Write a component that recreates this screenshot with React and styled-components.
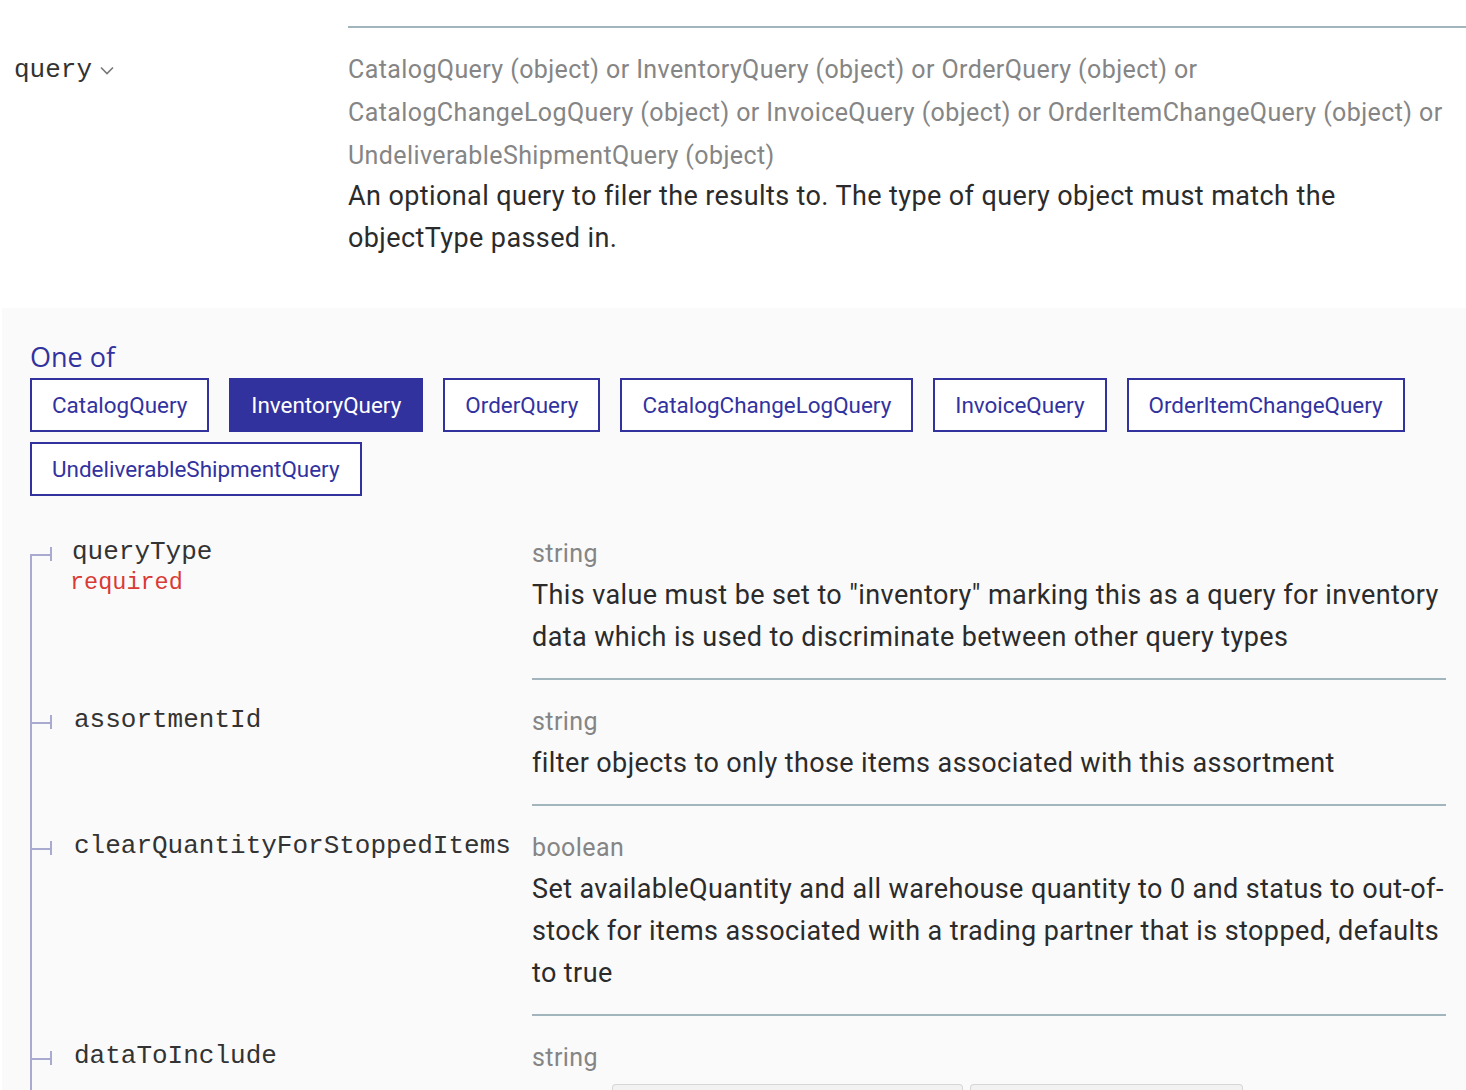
import React from "react";
import styled, { createGlobalStyle, css } from "styled-components";

const colors = {
  primary: "#32329f",
  tree: "#a9aad0",
  divider: "#a2b4bc",
  dimmed: "#858585",
  text: "#2b2b2b",
  code: "#333",
  required: "#d93a35",
  panel: "#fafafa"
};

const mono = `"Courier New", "Liberation Mono", monospace`;

const GlobalStyle = createGlobalStyle`
  html, body {
    margin: 0;
    padding: 0;
    background: #fff;
    overflow: hidden;
  }
  body {
    font-family: Roboto, "Liberation Sans", sans-serif;
    color: ${colors.text};
  }
`;

const Page = styled.div`
  width: 1466px;
`;

const FieldRow = styled.div`
  display: flex;
`;

const FieldName = styled.div`
  width: 348px;
  box-sizing: border-box;
  padding: 48px 0 0 14px;
`;

const NameLine = styled.div`
  display: flex;
  align-items: center;
  height: 43px;
  font-family: ${mono};
  font-size: 26px;
  color: ${colors.code};
  svg {
    margin-left: 8px;
    margin-top: 2px;
  }
`;

const FieldDetails = styled.div`
  flex: 1;
  margin-top: 26px;
  border-top: 2px solid ${colors.divider};
  padding: 20px 20px 49px 0;
`;

const TypeText = styled.div`
  font-size: 25px;
  letter-spacing: 0.4px;
  line-height: ${p => (p.big ? 43 : 40)}px;
  color: ${colors.dimmed};
`;

const Description = styled.div`
  font-size: 27px;
  letter-spacing: 0.4px;
  line-height: 42px;
  color: ${colors.text};
  margin-top: ${p => (p.tight ? -2 : 0)}px;
`;

const Panel = styled.div`
  margin-left: 2px;
  background: ${colors.panel};
  padding: 34px 20px 0 28px;
`;

const OneOfLabel = styled.div`
  font-family: "Open Sans", "Noto Sans", sans-serif;
  font-size: 27px;
  line-height: 30px;
  color: ${colors.primary};
  margin-bottom: 6px;
`;

const ButtonGroup = styled.div`
  display: flex;
  flex-wrap: wrap;
`;

const OneOfButton = styled.button`
  box-sizing: border-box;
  height: 54px;
  margin: 0 20px 10px 0;
  padding: 0 20px;
  border: 2px solid ${colors.primary};
  border-radius: 0;
  background: #fff;
  color: ${colors.primary};
  font-family: Roboto, "Liberation Sans", sans-serif;
  font-size: 22.45px;
  line-height: 50px;
  cursor: pointer;
  ${p =>
    p.active &&
    css`
      background: ${colors.primary};
      color: #fff;
    `}
`;

const PropTable = styled.div`
  margin-top: 6px;
`;

const PropRow = styled.div`
  display: flex;
`;

const NameCell = styled.div`
  position: relative;
  width: 502px;
  box-sizing: border-box;
  padding: 22px 0 0 42px;
  ${p =>
    p.first
      ? css`
          background: linear-gradient(${colors.tree}, ${colors.tree}) no-repeat
            0 42px / 2px 100%;
        `
      : css`
          border-left: 2px solid ${colors.tree};
        `}
  &:before {
    content: "";
    position: absolute;
    left: ${p => (p.first ? 0 : -2)}px;
    top: 42px;
    width: 22px;
    height: 2px;
    background: ${colors.tree};
  }
  &:after {
    content: "";
    position: absolute;
    left: ${p => (p.first ? 20 : 18)}px;
    top: 35px;
    width: 2px;
    height: 14px;
    background: ${colors.tree};
  }
`;

const PropName = styled.div`
  font-family: ${mono};
  font-size: 26px;
  line-height: 36px;
  color: ${colors.code};
  white-space: nowrap;
`;

const Required = styled.div`
  font-family: ${mono};
  font-size: 23.5px;
  line-height: 26px;
  color: ${colors.required};
  margin-left: -2px;
`;

const DetailsCell = styled.div`
  flex: 1;
  padding: 22px 0 20px;
  border-bottom: 2px solid ${colors.divider};
`;

const EnumRow = styled.div`
  display: flex;
  align-items: flex-start;
  margin-top: 6px;
  padding-left: 80px;
`;

const EnumValue = styled.span`
  box-sizing: border-box;
  margin-right: 7px;
  padding: 8px 10px;
  border: 1px solid rgba(51, 51, 51, 0.15);
  border-radius: 4px;
  background: rgba(51, 51, 51, 0.04);
  font-family: ${mono};
  font-size: 22px;
  line-height: 30px;
  color: ${colors.code};
  width: ${p => p.w}px;
`;

const Chevron = () => (
  <svg width="14" height="9" viewBox="0 0 14 9">
    <polyline
      points="1,1.5 7,7.5 13,1.5"
      fill="none"
      stroke="#777"
      strokeWidth="1.6"
    />
  </svg>
);

const queryTypes = [
  "CatalogQuery",
  "InventoryQuery",
  "OrderQuery",
  "CatalogChangeLogQuery",
  "InvoiceQuery",
  "OrderItemChangeQuery",
  "UndeliverableShipmentQuery"
];

const properties = [
  {
    name: "queryType",
    required: true,
    type: "string",
    description:
      'This value must be set to "inventory" marking this as a query for inventory data which is used to discriminate between other query types'
  },
  {
    name: "assortmentId",
    type: "string",
    description:
      "filter objects to only those items associated with this assortment"
  },
  {
    name: "clearQuantityForStoppedItems",
    type: "boolean",
    description:
      "Set availableQuantity and all warehouse quantity to 0 and status to out-of-stock for items associated with a trading partner that is stopped, defaults to true"
  },
  {
    name: "dataToInclude",
    type: "string",
    enumValues: [
      { value: '"AvailableQuantityOnly"', w: 351 },
      { value: '"AllInventoryData"', w: 273 }
    ]
  }
];

export default function App() {
  const active = "InventoryQuery";
  return (
    <Page>
      <GlobalStyle />
      <FieldRow>
        <FieldName>
          <NameLine>
            query
            <Chevron />
          </NameLine>
        </FieldName>
        <FieldDetails>
          <TypeText big>
            {queryTypes.map(t => `${t} (object)`).join(" or ")}
          </TypeText>
          <Description tight>
            An optional query to filer the results to. The type of query
            object must match the objectType passed in.
          </Description>
        </FieldDetails>
      </FieldRow>

      <Panel>
        <OneOfLabel>One of</OneOfLabel>
        <ButtonGroup>
          {queryTypes.map(t => (
            <OneOfButton key={t} active={t === active}>
              {t}
            </OneOfButton>
          ))}
        </ButtonGroup>

        <PropTable>
          {properties.map((p, i) => (
            <PropRow key={p.name}>
              <NameCell first={i === 0}>
                <PropName>{p.name}</PropName>
                {p.required && <Required>required</Required>}
              </NameCell>
              <DetailsCell>
                <TypeText>{p.type}</TypeText>
                {p.description && <Description>{p.description}</Description>}
                {p.enumValues && (
                  <EnumRow>
                    {p.enumValues.map(e => (
                      <EnumValue key={e.value} w={e.w}>
                        {e.value}
                      </EnumValue>
                    ))}
                  </EnumRow>
                )}
              </DetailsCell>
            </PropRow>
          ))}
        </PropTable>
      </Panel>
    </Page>
  );
}
